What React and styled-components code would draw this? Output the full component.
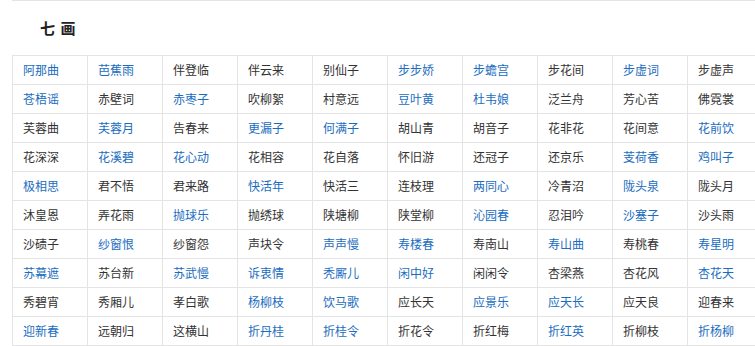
import React from "react";
import styled, { createGlobalStyle } from "styled-components";

const Global = createGlobalStyle`
  html, body { margin: 0; padding: 0; overflow: hidden; background: #fff; }
  body { font-family: "Noto Sans CJK SC", "Noto Sans", sans-serif; color: #333; }
`;

const Section = styled.section`
  margin-left: 12px;
  border-top: 1px solid #e4e4e4;
  width: 751px;
`;

const Heading = styled.h3`
  margin: 0;
  height: 54px;
  display: flex;
  align-items: center;
  padding-left: 28px;
  font-size: 15px;
  font-weight: bold;
  letter-spacing: 1px;
  color: #222;
  box-sizing: border-box;
  padding-bottom: 2px;
`;

const Table = styled.table`
  border-collapse: collapse;
  table-layout: fixed;
  width: 751px;
`;

const Cell = styled.td`
  width: 74px;
  height: 28px;
  padding: 0 0 0 10px;
  box-sizing: border-box;
  border: 1px solid #e4e4e4;
  font-size: 12px;
  line-height: 28px;
  white-space: nowrap;
  color: ${(p) => (p.$link ? "#1a6dc0" : "#333")};
`;

const Link = styled.a`
  color: inherit;
  text-decoration: none;
`;

const rows = [
  "阿那曲* 芭蕉雨* 伴登临 伴云来 别仙子 步步娇* 步蟾宫* 步花间 步虚词* 步虚声",
  "苍梧谣* 赤壁词 赤枣子* 吹柳絮 村意远 豆叶黄* 杜韦娘* 泛兰舟 芳心苦 佛霓裳",
  "芙蓉曲 芙蓉月* 告春来 更漏子* 何满子* 胡山青 胡音子 花非花 花间意 花前饮*",
  "花深深 花溪碧* 花心动* 花相容 花自落 怀旧游 还冠子 还京乐 芰荷香* 鸡叫子*",
  "极相思* 君不悟 君来路 快活年* 快活三 连枝理 两同心* 冷青沼 陇头泉* 陇头月",
  "沐皇恩 弄花雨 抛球乐* 抛绣球 陕塘柳 陕堂柳 沁园春* 忍泪吟 沙塞子* 沙头雨",
  "沙碛子 纱窗恨* 纱窗怨 声块令 声声慢* 寿楼春* 寿南山 寿山曲* 寿桃春 寿星明*",
  "苏幕遮* 苏台新 苏武慢* 诉衷情* 秃厮儿* 闲中好* 闲闲令 杏梁燕 杏花风 杏花天*",
  "秀碧宵 秀厢儿 孝白歌 杨柳枝* 饮马歌* 应长天 应景乐* 应天长* 应天良 迎春来",
  "迎新春* 远朝归 这横山 折丹桂* 折桂令* 折花令 折红梅 折红英* 折柳枝 折杨柳*",
].map((r) =>
  r.split(" ").map((s) => ({ name: s.replace("*", ""), link: s.endsWith("*") }))
);

export default function App() {
  return (
    <>
      <Global />
      <Section>
        <Heading>七 画</Heading>
        <Table>
          <tbody>
            {rows.map((row, i) => (
              <tr key={i}>
                {row.map((c, j) => (
                  <Cell key={j} $link={c.link}>
                    {c.link ? <Link href="#">{c.name}</Link> : c.name}
                  </Cell>
                ))}
              </tr>
            ))}
          </tbody>
        </Table>
      </Section>
    </>
  );
}
